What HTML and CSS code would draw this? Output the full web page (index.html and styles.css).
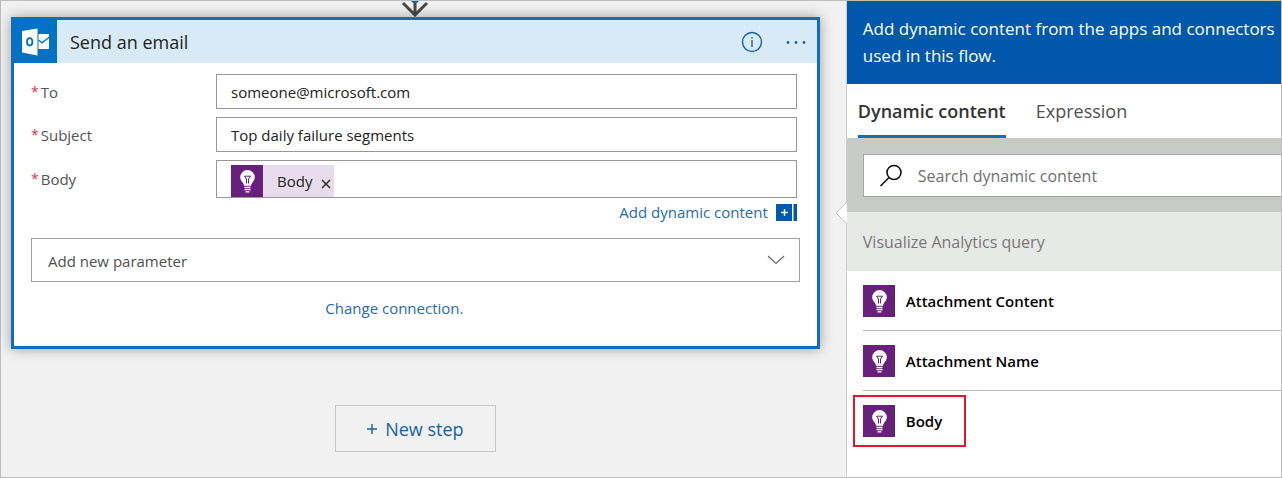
FILE: index.html
```html
<!DOCTYPE html>
<html lang="en">
<head>
<meta charset="utf-8">
<meta name="viewport" content="width=device-width, initial-scale=1">
<title>Send an email</title>
<link rel="stylesheet" href="styles.css">
</head>
<body>
<svg class="defs" aria-hidden="true">
  <symbol id="bulb" viewBox="0 0 32 32">
    <path fill="#fff" d="M16.500 5a7.300 7.300 0 0 0-7.300 7.300c0 2.400 1.200 3.700 2.300 5.200.9 1.200 1.400 2 1.500 3.200h7c.1-1.200.6-2 1.500-3.200 1.100-1.500 2.300-2.800 2.300-5.200A7.300 7.300 0 0 0 16.500 5z"/>
    <path fill="none" stroke="#68217a" stroke-width="1" d="M15.500 18.500v-4.500l-2-2.800h6l-2 2.800v4.500"/>
    <path fill="#fff" d="M13.500 21.700h6v1.500h-6zM13.500 24h6v1.300h-6zM14.500 26.200h4v1.200h-4z"/>
  </symbol>
</svg>
<div class="designer">
  <main class="canvas">
    <svg class="arrow" width="28" height="16" viewBox="0 0 28 16" aria-hidden="true">
      <path d="M14 0v13M2 2l12 12L26 2" fill="none" stroke="#484848" stroke-width="3"/>
      <path d="M10 0h8l-2 2h-4z" fill="#1b6aa8"/>
    </svg>
    <section class="card">
      <header class="card-head">
        <svg class="app-icon" viewBox="0 0 43 43" aria-hidden="true">
          <rect width="43" height="43" fill="#0072c6"/>
          <path d="M8 11 23.500 8.500v27L8 32.500z" fill="#fff"/>
          <ellipse cx="15.700" cy="21.800" rx="2.700" ry="3.700" fill="none" stroke="#0072c6" stroke-width="1.800"/>
          <path d="M24.500 14H35v15H24.500z" fill="#fff"/>
          <path d="m24.500 20 3.500 2.800L35.500 17" fill="none" stroke="#0072c6" stroke-width="1.400"/>
        </svg>
        <h1 class="card-title">Send an email</h1>
        <button class="icon-btn" type="button" aria-label="Information">
          <svg width="22" height="22" viewBox="0 0 22 22"><circle cx="11" cy="11" r="9.500" fill="none" stroke="#1462a8" stroke-width="1.400"/><path d="M11 9v7M11 6v1.600" stroke="#1462a8" stroke-width="1.400"/></svg>
        </button>
        <button class="icon-btn" type="button" aria-label="More">
          <svg width="22" height="22" viewBox="0 0 22 22" fill="#1462a8"><circle cx="3" cy="11.500" r="1.400"/><circle cx="11" cy="11.500" r="1.400"/><circle cx="19" cy="11.500" r="1.400"/></svg>
        </button>
      </header>
      <form class="card-body">
        <div class="fields">
          <label class="label" for="to"><span class="req">*</span>To</label>
          <input class="field" id="to" type="text" value="someone@microsoft.com">
          <label class="label" for="subject"><span class="req">*</span>Subject</label>
          <input class="field" id="subject" type="text" value="Top daily failure segments">
          <span class="label" id="body-label"><span class="req">*</span>Body</span>
          <div class="field token-field" role="group" aria-labelledby="body-label">
            <span class="token">
              <svg class="tile" aria-hidden="true"><use href="#bulb"/></svg>
              <span class="token-text">Body</span>
              <button class="token-x" type="button" aria-label="Remove Body"><svg width="10" height="10" viewBox="0 0 10 10"><path d="m1 1 8 8M9 1 1 9" stroke="#222" stroke-width="1.400"/></svg></button>
            </span>
          </div>
        </div>
        <a class="link add-link" href="#dynamic">Add dynamic content
          <svg width="21" height="17" viewBox="0 0 21 17" aria-hidden="true"><path fill="#0058ad" d="M0 0h16v17H0zM17.500 0H21v17h-3.500z"/><path d="M8.500 5v7M5 8.500h7" stroke="#fff" stroke-width="1.400"/></svg>
        </a>
        <div class="select-wrap">
          <select class="select" aria-label="Add new parameter"><option>Add new parameter</option></select>
          <svg class="chevron" width="18" height="10" viewBox="0 0 18 10" aria-hidden="true"><path d="m1 1 8 7.500L17 1" fill="none" stroke="#666" stroke-width="1.200"/></svg>
        </div>
        <a class="link change-link" href="#connection">Change connection.</a>
      </form>
    </section>
    <button class="new-step" type="button"><svg width="10" height="10" viewBox="0 0 10 10" aria-hidden="true"><path d="M5 0v10M0 5h10" stroke="#1462a8" stroke-width="1.400"/></svg>New step</button>
  </main>
  <aside class="panel" id="dynamic">
    <svg class="pointer" width="12" height="22" viewBox="0 0 12 22" aria-hidden="true"><path d="M12 0 1 11l11 11" fill="#fff" stroke="#c4c4c4"/></svg>
    <p class="intro">Add dynamic content from the apps and connectors used in this flow.</p>
    <div class="tabs" role="tablist">
      <button class="tab tab-on" type="button" role="tab" aria-selected="true">Dynamic content</button>
      <button class="tab" type="button" role="tab" aria-selected="false">Expression</button>
    </div>
    <div class="search-bar">
      <label class="search">
        <svg width="24" height="24" viewBox="0 0 24 24" aria-hidden="true"><g fill="none" stroke="#111" stroke-width="1.600"><circle cx="15" cy="8.500" r="7"/><path d="m10 13.500-8.500 8.500"/></g></svg>
        <input class="search-input" type="search" placeholder="Search dynamic content" aria-label="Search dynamic content">
      </label>
    </div>
    <h2 class="group">Visualize Analytics query</h2>
    <ul class="items">
      <li class="item"><button class="pick" type="button"><svg class="tile" aria-hidden="true"><use href="#bulb"/></svg>Attachment Content</button></li>
      <li class="item"><button class="pick" type="button"><svg class="tile" aria-hidden="true"><use href="#bulb"/></svg>Attachment Name</button></li>
      <li class="item"><button class="pick pick-marked" type="button"><svg class="tile" aria-hidden="true"><use href="#bulb"/></svg>Body</button></li>
    </ul>
  </aside>
</div>
</body>
</html>
```
FILE: styles.css
```css
* { box-sizing: border-box; }
body {
  margin: 0;
  font-family: "Open Sans", "Noto Sans", sans-serif;
  font-size: 16px;
  color: #222;
}
button, input, select { font: inherit; color: inherit; }
button { padding: 0; border: 0; background: none; cursor: pointer; }
svg { flex: none; }
.defs { position: absolute; width: 0; height: 0; }

.designer {
  display: flex;
  min-height: 100vh;
  border: 1px solid #bdbdbd;
  background: #f1f1f1;
}

.canvas {
  flex: 1;
  min-width: 0;
  display: flex;
  flex-direction: column;
  align-items: center;
  padding: 0 26px 24px 10px;
}
.arrow { display: block; }
.card {
  width: 100%;
  border: 3px solid #106ebe;
  background: #fff;
  box-shadow: 0 0 12px rgba(0, 0, 0, .35);
}
.card-head {
  display: flex;
  align-items: center;
  gap: 22px;
  padding-right: 10px;
  background: #d9eaf7;
}
.app-icon { width: 43px; height: 43px; }
.card-title {
  flex: 1;
  margin: 0 0 0 -9px;
  font-size: 18px;
  font-weight: 400;
}
.icon-btn { display: flex; }

.card-body {
  display: flex;
  flex-direction: column;
  padding: 11px 17px 26px;
  font-size: 15px;
}
.fields {
  display: grid;
  grid-template-columns: 185px 1fr;
  row-gap: 8px;
  padding-right: 3px;
}
.label {
  align-self: center;
  display: flex;
  gap: 2px;
  color: #555;
}
.req { color: #d9364a; font-size: 14px; }
.field {
  width: 100%;
  height: 35px;
  padding: 0 14px;
  border: 1px solid #979797;
  background: #fff;
}
.token-field { height: 38px; display: flex; align-items: flex-end; }
.token {
  display: flex;
  align-items: center;
  padding-right: 3px;
  background: #e8dcec;
}
.tile { display: block; width: 32px; height: 32px; background: #68217a; }
.token-text { margin: 0 9px 0 14px; }
.token-x { display: flex; padding-top: 5px; }

.link { color: #1f6cb0; text-decoration: none; line-height: 24px; }
.add-link {
  align-self: flex-end;
  display: flex;
  align-items: center;
  gap: 8px;
  margin: 2px 3px 14px 0;
}
.select-wrap { display: grid; align-items: center; }
.select {
  grid-area: 1 / 1;
  width: 100%;
  height: 44px;
  padding: 2px 16px 0;
  border: 1px solid #a0a0a0;
  border-radius: 0;
  background: #fff;
  color: #505050;
  appearance: none;
}
.chevron { grid-area: 1 / 1; justify-self: end; margin-right: 15px; pointer-events: none; }
.change-link { align-self: center; margin: 14px 42px 0 0; }

.new-step {
  display: flex;
  align-items: center;
  justify-content: center;
  gap: 8px;
  width: 161px;
  height: 47px;
  margin-top: 56px;
  border: 1px solid #c8c8c8;
  color: #1462a8;
  font-size: 18px;
}

.panel {
  position: relative;
  flex: 0 0 34%;
  border-left: 1px solid #ccc;
  background: #fff;
}
.pointer { position: absolute; top: 201px; left: -12px; }
.intro {
  margin: 0;
  padding: 14px 0 15px 16px;
  background: #0058ad;
  color: #fff;
  font-size: 17px;
  line-height: 27px;
}
.tabs { display: flex; gap: 30px; padding: 0 11px; }
.tab {
  height: 54px;
  padding-top: 3px;
  border-bottom: 3px solid transparent;
  color: #505050;
  font-size: 18px;
}
.tab-on { border-color: #106ebe; color: #333; font-weight: 600; }
.search-bar { padding: 16px 0 15px 16px; background: #c8cac7; }
.search {
  display: flex;
  align-items: center;
  gap: 15px;
  height: 43px;
  padding-left: 15px;
  border: 1px solid #a6a6a6;
  border-right: 0;
  background: #fff;
}
.search-input { flex: 1; min-width: 0; padding: 0; border: 0; outline: 0; appearance: none; background: none; }
.search-input::placeholder { color: #707070; opacity: 1; }
.group {
  margin: 0;
  padding: 2px 16px 0;
  background: #e7e9e6;
  color: #777;
  font-size: 16px;
  font-weight: 400;
  line-height: 57px;
}
.items { margin: 0; padding: 0 0 0 16px; list-style: none; }
.item { padding: 14px 0 13px; border-bottom: 1px solid #b8b8b8; }
.item:last-child { border: 0; }
.pick { display: flex; align-items: center; gap: 11px; color: #000; font-size: 15px; font-weight: 600; }
.pick-marked { padding-right: 14px; outline: 2px solid #e3142d; outline-offset: 8px; }
```
